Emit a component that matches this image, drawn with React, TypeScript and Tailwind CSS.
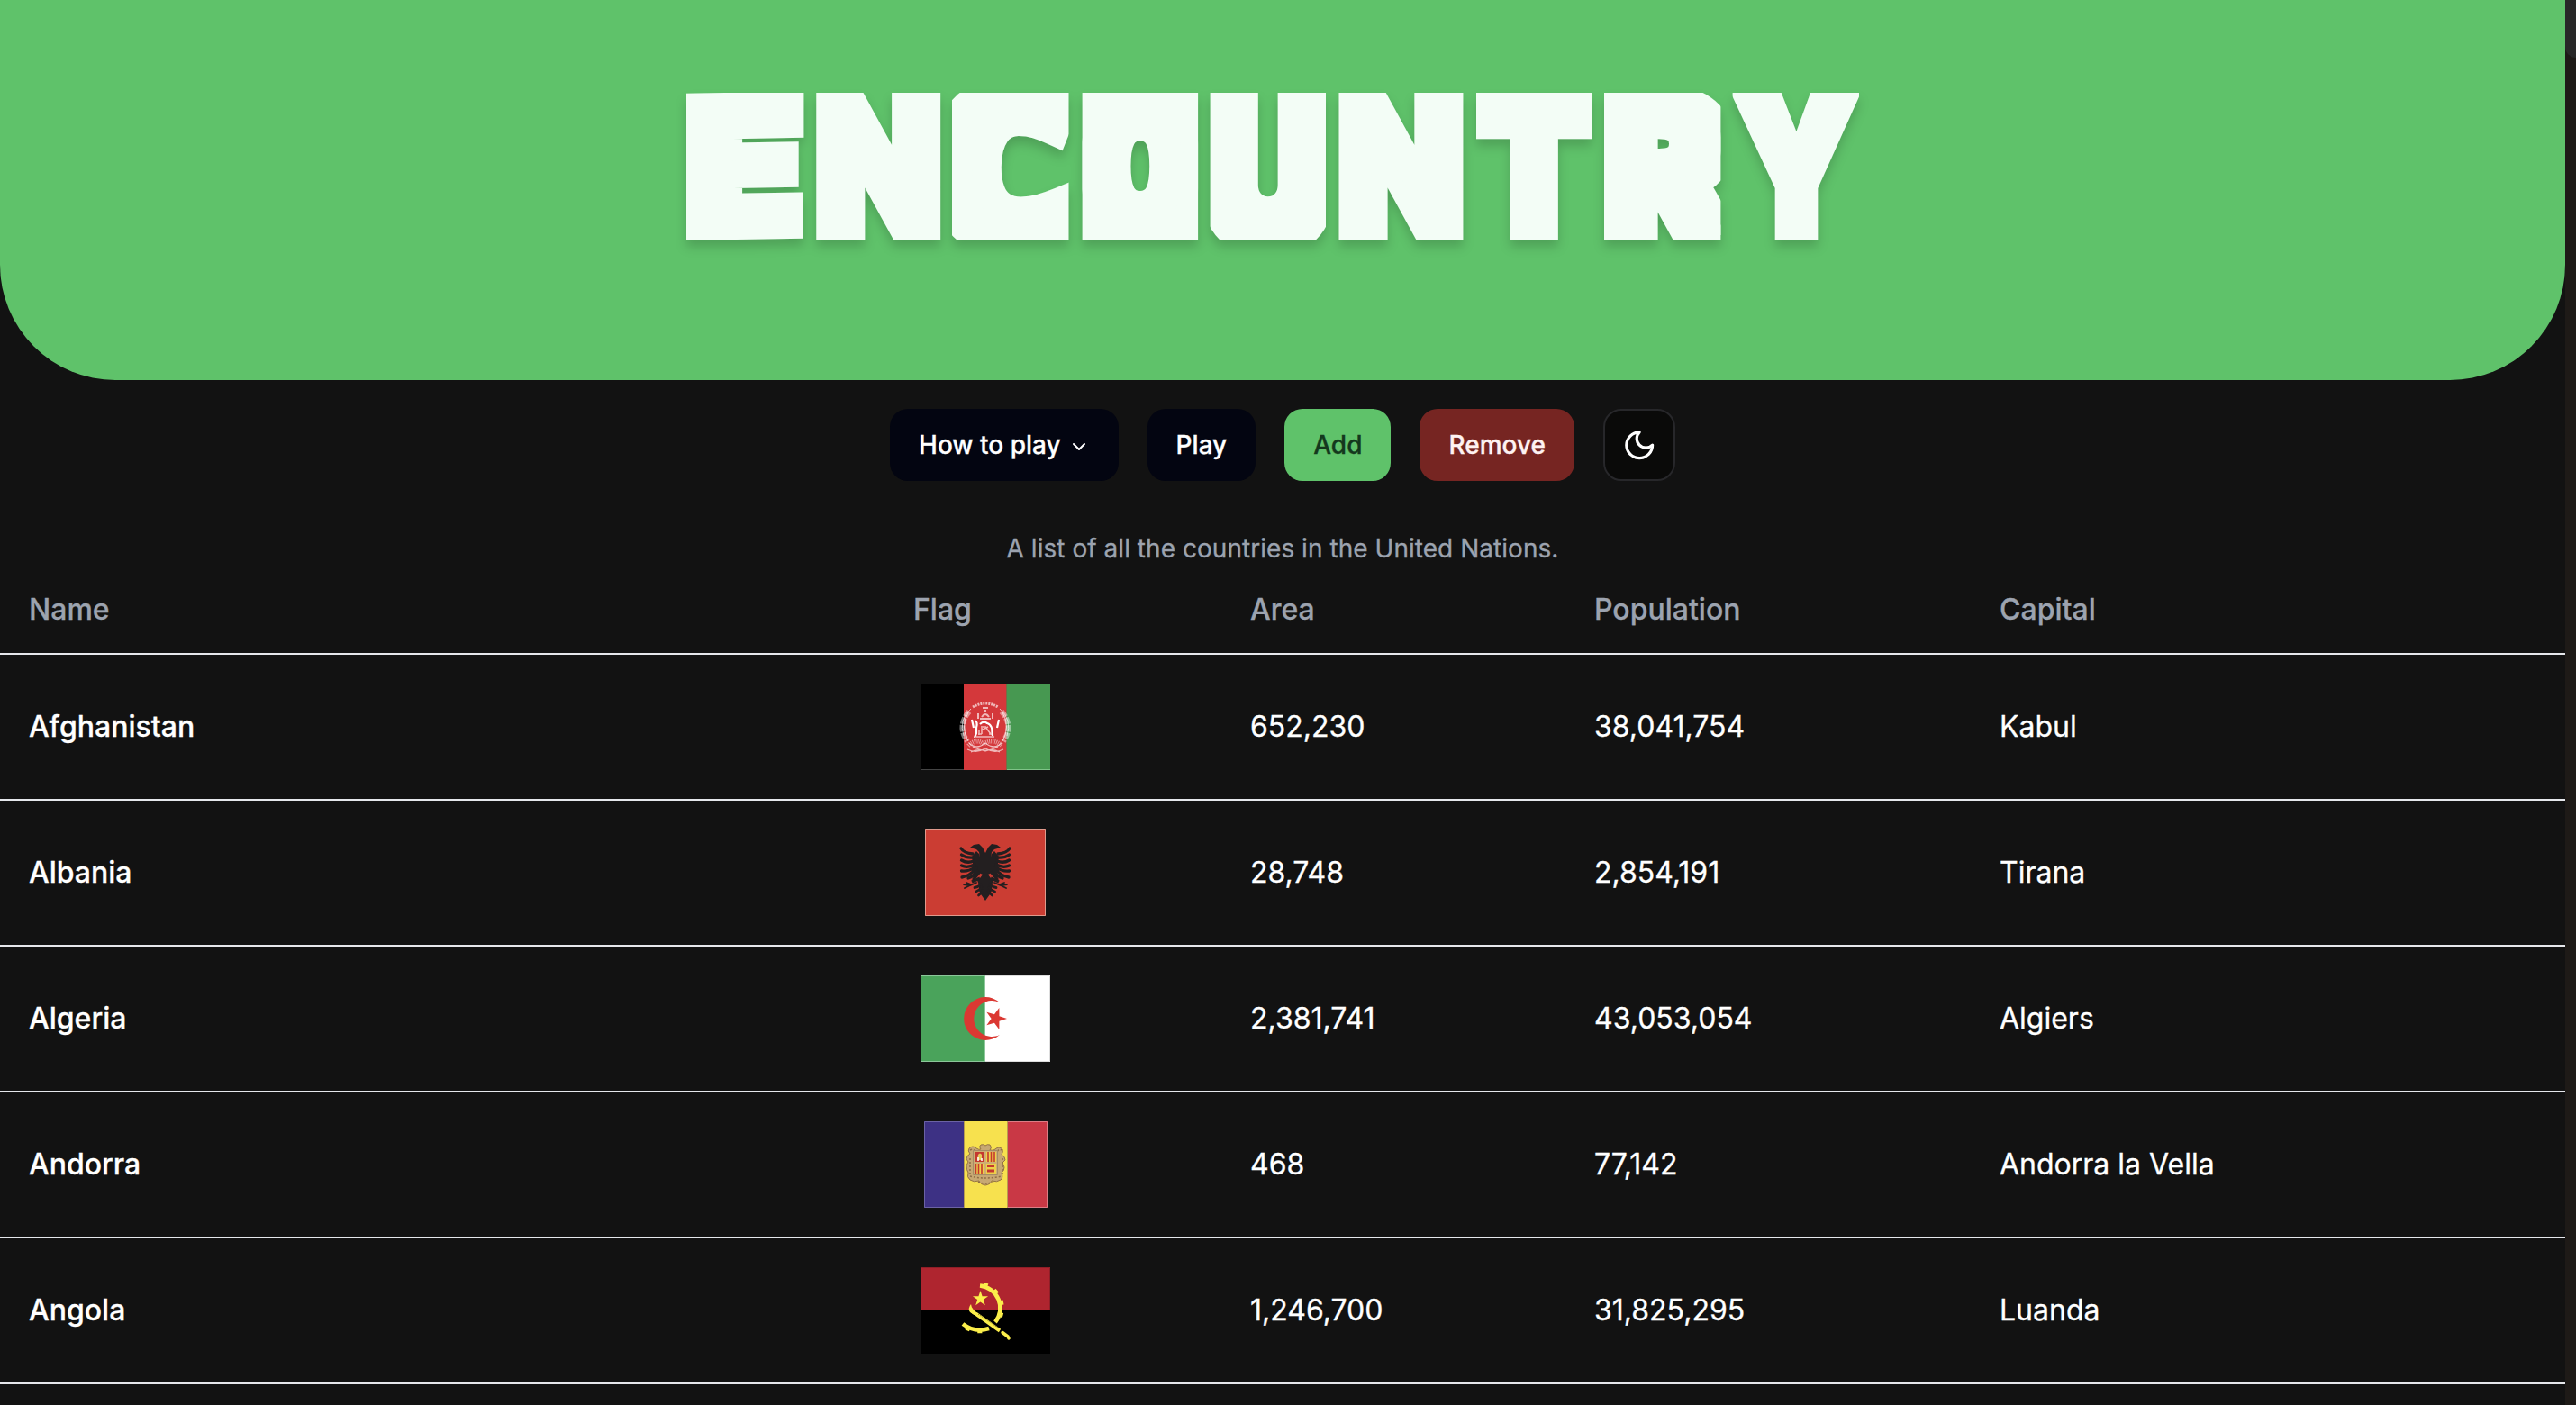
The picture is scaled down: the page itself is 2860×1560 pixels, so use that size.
import React from "react";
import { ChevronDown } from "lucide-react";

type Letter = {
  ch: string;
  x: number;
  w: number;
  fs: number;
  sx: number;
  stroke: number;
  dx?: number;
  dy?: number;
  skew?: number;
  font?: string;
};

const letters: Letter[] = [
  { ch: "E", x: 0, w: 131, fs: 197, sx: 1.06, stroke: 20, dx: -1, skew: -1 },
  { ch: "N", x: 143.6, w: 139.4, fs: 197, sx: 0.9, stroke: 20 },
  { ch: "C", x: 295, w: 129.5, fs: 238, sx: 1.02, stroke: 32, dy: 14, dx: -8, font: "Open Sans" },
  { ch: "O", x: 439.6, w: 128.5, fs: 262, sx: 0.72, stroke: 50, dy: 23.5 },
  { ch: "U", x: 581.6, w: 128.4, fs: 236, sx: 0.84, stroke: 29, dy: 15 },
  { ch: "N", x: 723.7, w: 139.4, fs: 197, sx: 0.9, stroke: 20 },
  { ch: "T", x: 877, w: 128.5, fs: 197, sx: 0.9, stroke: 20 },
  { ch: "R", x: 1019, w: 129.4, fs: 210, sx: 1.04, stroke: 26, dy: 5, dx: 1 },
  { ch: "Y", x: 1161.6, w: 140.4, fs: 197, sx: 0.81, stroke: 20 },
];

function Wordmark() {
  return (
    <h1 className="drop-shadow-[0_8px_6px_rgba(0,0,0,0.17)]">
      <svg width="1302" height="163" viewBox="0 0 1302 163" className="block overflow-visible">
        {letters.map((l, i) => (
          <svg key={i} x={l.x} y="0" width={l.w} height="163" overflow="hidden">
            <text
              transform={`translate(${l.w / 2 + (l.dx ?? 0)} ${153 + (l.dy ?? 0)}) skewY(${l.skew ?? 0}) scale(${l.sx} 1)`}
              textAnchor="middle"
              fontFamily={`${l.font ?? "Inter"}, sans-serif`}
              fontWeight="900"
              fontSize={l.fs}
              fill="#f3fdf6"
              stroke="#f3fdf6"
              strokeWidth={l.stroke}
              strokeLinejoin="miter"
            >
              {l.ch}
            </text>
          </svg>
        ))}
      </svg>
    </h1>
  );
}

const star = (cx: number, cy: number, r: number, rot: number) =>
  Array.from({ length: 10 }, (_, i) => {
    const a = ((rot + i * 36) * Math.PI) / 180;
    const q = i % 2 ? r * 0.39 : r;
    return `${(cx + q * Math.cos(a)).toFixed(2)},${(cy + q * Math.sin(a)).toFixed(2)}`;
  }).join(" ");

function Afghanistan() {
  return (
    <svg width="144" height="96" viewBox="0 0 144 96">
      <path fill="#000" d="M0 0h48v96H0z" />
      <path fill="#d4383b" d="M48 0h48v96H48z" />
      <path fill="#479851" d="M96 0h48v96H96z" />
      <path stroke="#7a6a45" d="M95.5 0v96" />
      <path stroke="#444" d="M0 95.5h48" />
      <path stroke="#7fc488" d="M96 95.5h48" />
      <g fill="none" stroke="#fff" strokeOpacity=".65">
        <path strokeWidth="6" strokeDasharray="7 1.5" strokeOpacity=".45" d="M54 31Q40 47 52 64M90 31Q104 47 92 64" />
        <path strokeWidth="1" d="M56 28Q42 40 48 58M88 28Q102 40 96 58M53 32Q44 48 53 64M91 32Q100 48 91 64" />
        <path strokeWidth="3" strokeDasharray="2 1" d="M58 26Q72 18 86 26" />
        <path strokeWidth="2" d="M69 27h6M64 33v6M80 33v6M68 37q4-6 8 0M66 39h12M72 29v3" />
        <path strokeWidth="5" strokeDasharray="1 1" strokeOpacity=".5" d="M53 69Q62 60 70 67Q80 60 91 69" />
        <path strokeWidth="1.2" d="M54 66q8 8 18 0q10 8 18 0M52 73q10 5 20-1q10 6 20 1M56 76q8-4 16-1q8-3 16 1M58 70q14 8 28 0" />
        <path strokeWidth="1.5" d="M62 59h20M64 56h4M76 56h4M65 52v5M79 52v5" />
      </g>
      <path fill="none" stroke="#fff" strokeWidth="2.2" d="M57 40l2 9M60 41q4 1 2 8v6l-2 5M87 40l-2 9M66 45q4-4 8-1q6 1 6 14" />
      <path fill="none" stroke="#f5b9b9" strokeWidth="1.5" d="M67 48h6M67 52l8-4M68 56v-7M72 48l6 8" />
    </svg>
  );
}

function Albania() {
  const half = (
    <g>
      <path d="M67 79L62 72L60 68L60 62L58 56L61 54L64 50L54 45L52 30L57 24L60 27L61 31L60 25L57 22L50 20L54 17L60 16L64 20L67 26Z" />
      <path fill="none" stroke="#231f20" strokeWidth="3.3" strokeLinecap="round" d="M40 21Q43 26 53 27M40.5 28Q46 32 54 31M40.5 34Q47 38 54 35M40.5 40Q47 43 55 39M40.5 46Q48 47 55 42M41 53Q49 52 57 43M48 54Q54 52 58 46M54 55L60 48" />
      <path fill="none" stroke="#231f20" strokeWidth="2.8" strokeLinecap="round" d="M55 64.500Q59 64 62 61M56.500 69Q60 68 63 64M59.500 73Q62 71 64 68" />
      <path fill="none" stroke="#231f20" strokeWidth="3.500" d="M52 58L61 54" />
      <path fill="none" stroke="#231f20" strokeWidth="1.8" strokeLinecap="round" d="M57 59L50 62L43 61M50 62L44 65M51 61L46 59" />
    </g>
  );
  return (
    <svg width="134" height="96" viewBox="0 0 134 96">
      <path fill="#cb3d33" d="M0 0h134v96H0z" />
      <path fill="none" stroke="#e09a8c" d="M.5.5h133v95H.5z" />
      <g fill="#231f20">
        {half}
        <g transform="matrix(-1 0 0 1 134 0)">{half}</g>
      </g>
    </svg>
  );
}

function Algeria() {
  return (
    <svg width="144" height="96" viewBox="0 0 144 96">
      <path fill="#4aa35b" d="M0 0h72v96H0z" />
      <path fill="#fff" d="M72 0h72v96H72z" />
      <path fill="none" stroke="#8cc79a" d="M72 .5H.5v95H72M71.5 0v96" />
      <path fill="none" stroke="#ddd" d="M72 .5h71.5v95H72" />
      <path fill="#db3832" d="M88 30A24 24 0 1 0 88 66A20 20 0 1 1 88 30Z" />
      <polygon fill="#db3832" points={star(83.5, 48, 12.5, 0)} />
    </svg>
  );
}

function Andorra() {
  return (
    <svg width="137" height="96" viewBox="0 0 137 96">
      <path fill="#3d3184" d="M0 0h44v96H0z" />
      <path fill="#f7e14e" d="M44 0h49v96H44z" />
      <path fill="#c93845" d="M93 0h44v96H93z" />
      <path fill="none" stroke="#6b62a4" d="M44 .5H.5v95H44" />
      <path fill="none" stroke="#dc7d86" d="M93 .5h43.500v95H93" />
      <path stroke="#b89e50" d="M44.500 0v96M92.500 0v96" />
      <path
        fill="#c7a873"
        stroke="#957444"
        strokeWidth="1"
        d="M63 26q3-1 5 1q2-2 5-1q3 3 0 6q4 1 6-1q4-4 8 0q1 3-1 6q4 2 4 6l-3 3l2 5q0 4-3 6q2 6-1 8q-4 3-10 1q-1 4-7 5q-6-1-7-5q-6 2-10-1q-4-3-2-8q-2-3-2-8l2-4l-2-3q0-4 4-6q-3-3-1-6q4-4 8 0q3 2 5 1q-3-3 0-5z"
      />
      <path fill="none" stroke="#8f6d45" strokeWidth="1.500" strokeDasharray="2 2" d="M51 32q4-2 6 2h24q2-4 5-2M51 41v17M87 41v17M51 61q17 4 35 0M60 67q8 4 17 0" />
      <path fill="#cfae72" stroke="#a58c66" d="M54.500 32.500h27v27h-27z" />
      <path fill="#c5392f" d="M56 34h11v11H56z" />
      <path fill="#eed04a" d="M69 34h11v11H69zM56 47h11v11H56zM69 47h11v11H69z" />
      <path stroke="#c5392f" strokeWidth="1.600" d="M71 34v11M74.500 34v11M78 34v11M57.500 47v11M60.500 47v11M64 47v11" />
      <path stroke="#c5392f" strokeWidth="2.800" d="M70 49.500h8M70 55h8" />
      <path fill="#e5c95c" d="M60 37q2-3 4 0v6h-5z" />
      <path stroke="#fff" strokeWidth="1.500" d="M60 40v4M64 41v3" />
    </svg>
  );
}

function Angola() {
  return (
    <svg width="144" height="96" viewBox="0 0 144 96">
      <path fill="#af252f" d="M0 0h144v48H0z" />
      <path fill="#000" d="M0 48h144v48H0z" />
      <path fill="none" stroke="#8f1e27" d="M0 .5h143.500V48" />
      <g fill="none" stroke="#fbee4b">
        <path strokeWidth="4.500" d="M66 20.500A25 25 0 0 1 83 61" />
        <path strokeWidth="4.500" d="M47 63Q60 73 76 68" />
        <path strokeWidth="3.500" strokeDasharray="5 9" d="M70 18.500A27.500 27.500 0 0 1 86 61M50 67.500Q62 74 76 70" />
        <path strokeWidth="4" d="M56 46Q57 50 62 52L88 70.500" />
        <path strokeWidth="3.500" strokeLinecap="round" d="M91 72.500L97 77L98 79" />
      </g>
      <path fill="#fbee4b" d="M56 41q-4 5-1 9l10 6l-2-5q-6-3-7-10z" />
      <path stroke="#8a7d20" strokeDasharray="1.500 1" d="M64 52L86 67" />
      <polygon fill="#fbee4b" points={star(66.500, 35, 9, -90)} />
    </svg>
  );
}

const rows = [
  { name: "Afghanistan", flag: <Afghanistan />, area: "652,230", pop: "38,041,754", cap: "Kabul" },
  { name: "Albania", flag: <Albania />, area: "28,748", pop: "2,854,191", cap: "Tirana" },
  { name: "Algeria", flag: <Algeria />, area: "2,381,741", pop: "43,053,054", cap: "Algiers" },
  { name: "Andorra", flag: <Andorra />, area: "468", pop: "77,142", cap: "Andorra la Vella" },
  { name: "Angola", flag: <Angola />, area: "1,246,700", pop: "31,825,295", cap: "Luanda" },
];

const cols = "grid grid-cols-[982px_374px_382px_450px_1fr] items-center border-b-2 border-[#e5e7eb]";
const button = "flex h-20 items-center rounded-[20px] px-8";

export default function App() {
  return (
    <div className="flex h-[1560px] w-[2860px] overflow-hidden bg-[#121212] font-['Inter',sans-serif] text-[32px] text-white [-webkit-text-stroke:0.3px]">
      <main className="w-[2848px] shrink-0">
        <header className="flex h-[422px] justify-center rounded-b-[128px] bg-[#5fc26a] pt-[103px] pr-[22px]">
          <Wordmark />
        </header>

        <nav className="mt-8 flex justify-center gap-8 text-[28px] font-medium">
          <button className={`${button} bg-[#030511]`}>
            How to play
            <ChevronDown className="mt-1 ml-2 size-6" strokeWidth={2} />
          </button>
          <button className={`${button} bg-[#030511]`}>Play</button>
          <button className={`${button} bg-[#5fc26a] text-[#14381d]`}>Add</button>
          <button className={`${button} bg-[#762522] text-[#fef2f2]`}>Remove</button>
          <button className="flex size-20 items-center justify-center rounded-[20px] border-2 border-[#27272a] bg-[#0a0a09]">
            <svg
              width="38.4"
              height="38.4"
              viewBox="0 0 24 24"
              fill="none"
              stroke="currentColor"
              strokeWidth="2"
              strokeLinecap="round"
              strokeLinejoin="round"
            >
              <path d="M12 3a6 6 0 0 0 9 9 9 9 0 1 1-9-9Z" />
            </svg>
          </button>
        </nav>

        <p className="mt-[55px] text-center text-[28px] leading-10 tracking-[0.04px] text-[#9ca3af]">
          A list of all the countries in the United Nations.
        </p>

        <div className={`${cols} h-[98px] font-medium text-[#9ca3af]`}>
          <div className="px-8">Name</div>
          <div className="px-8">Flag</div>
          <div className="px-8">Area</div>
          <div className="px-8">Population</div>
          <div className="px-8">Capital</div>
        </div>
        {rows.map((r) => (
          <div key={r.name} className={`${cols} h-[162px]`}>
            <div className="px-8 font-medium">{r.name}</div>
            <div className="px-8">
              <div className="flex w-40 justify-center">{r.flag}</div>
            </div>
            <div className="px-8">{r.area}</div>
            <div className="px-8">{r.pop}</div>
            <div className="px-8">{r.cap}</div>
          </div>
        ))}
      </main>
      <aside className="w-3 overflow-hidden bg-[#1e1a17]">
        <div className="h-16 w-6 rounded-b-xl bg-[#282828]" />
      </aside>
    </div>
  );
}
